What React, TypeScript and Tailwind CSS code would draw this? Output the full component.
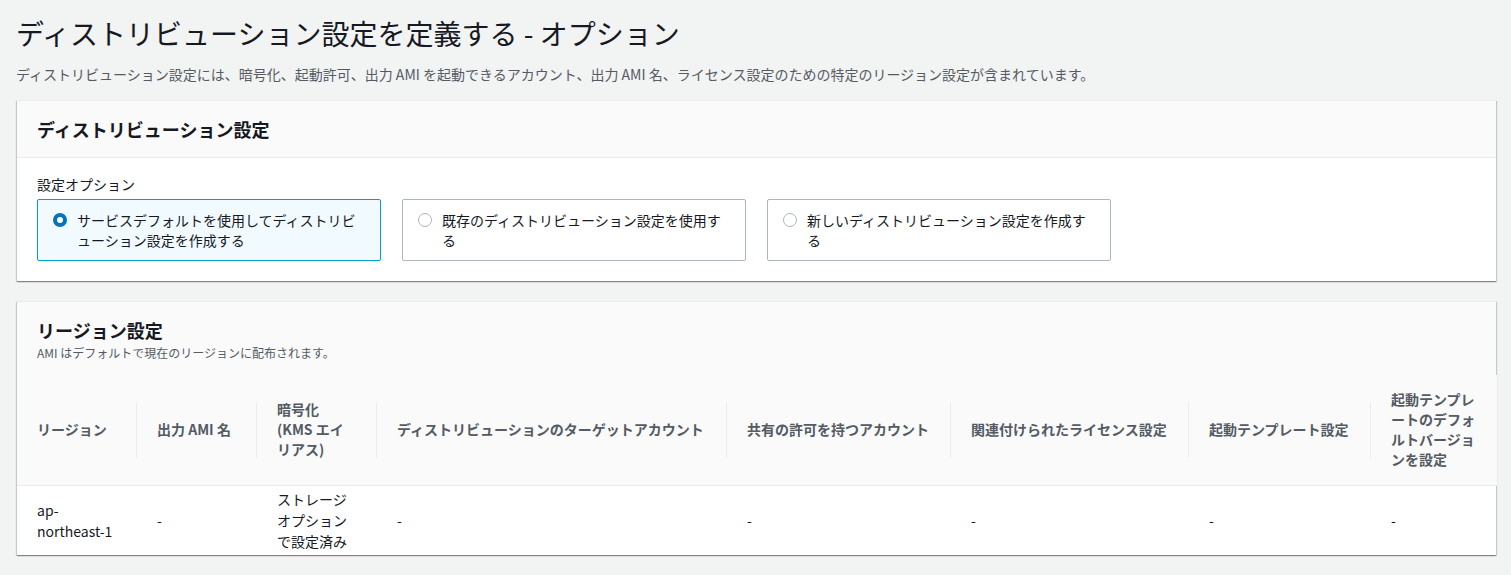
const font = { fontFamily: '"Noto Sans CJK JP", "Noto Sans", sans-serif' };

const cardCls =
  "mx-px bg-white border-t border-[#eaeded] shadow-[0_1px_1px_0_rgba(0,28,36,0.3),1px_1px_1px_0_rgba(0,28,36,0.15),-1px_1px_1px_0_rgba(0,28,36,0.15)]";

function Radio({ checked }: { checked: boolean }) {
  return checked ? (
    <span className="mt-[3px] flex h-[14px] w-[14px] shrink-0 items-center justify-center rounded-full bg-[#0073bb]">
      <span className="h-[6px] w-[6px] rounded-full bg-white" />
    </span>
  ) : (
    <span className="mt-[3px] h-[14px] w-[14px] shrink-0 rounded-full border-[1.5px] border-[#aab7b8] bg-white" />
  );
}

function Tile({ label, checked }: { label: string; checked: boolean }) {
  return (
    <div
      className={
        "flex w-[344px] gap-[10px] rounded-[2px] border py-[10px] pl-[15px] pr-[15px] " +
        (checked ? "border-[#00a1c9] bg-[#f1faff]" : "border-[#aab7b8] bg-white")
      }
    >
      <Radio checked={checked} />
      <span className="text-[14px] leading-[20px] text-[#16191f]">{label}</span>
    </div>
  );
}

const cols: { w: number; head: string[] }[] = [
  { w: 120, head: ["リージョン"] },
  { w: 120, head: ["出力 AMI 名"] },
  { w: 120, head: ["暗号化", "(KMS エイ", "リアス)"] },
  { w: 350, head: ["ディストリビューションのターゲットアカウント"] },
  { w: 224, head: ["共有の許可を持つアカウント"] },
  { w: 238, head: ["関連付けられたライセンス設定"] },
  { w: 182, head: ["起動テンプレート設定"] },
  { w: 126, head: ["起動テンプレ", "ートのデフォ", "ルトバージョ", "ンを設定"] },
];

const row: string[][] = [
  ["ap-", "northeast-1"],
  ["-"],
  ["ストレージ", "オプション", "で設定済み"],
  ["-"],
  ["-"],
  ["-"],
  ["-"],
  ["-"],
];

function Lines({ lines }: { lines: string[] }) {
  return (
    <>
      {lines.map((l, i) => (
        <span key={i} className="block whitespace-nowrap">
          {l}
        </span>
      ))}
    </>
  );
}

export default function App() {
  return (
    <div className="min-h-screen bg-[#f2f3f3] pl-4 pr-[14px] pt-[15px] pb-5" style={font}>
      <h1 className="text-[28px] leading-[36px] font-normal text-[#16191f]">
        ディストリビューション設定を定義する - オプション
      </h1>
      <p className="mt-[13px] text-[14px] leading-[20px] text-[#545b64]">
        ディストリビューション設定には、暗号化、起動許可、出力 AMI を起動できるアカウント、出力 AMI 名、ライセンス設定のための特定のリージョン設定が含まれています。
      </p>

      <section className={"mt-4 " + cardCls}>
        <div className="border-b border-[#eaeded] bg-[#fafafa] px-5 py-[14px]">
          <h2 className="text-[18px] leading-[28px] font-bold text-[#16191f]">ディストリビューション設定</h2>
        </div>
        <div className="px-5 pt-4 pb-5">
          <div className="text-[14px] leading-[20px] text-[#16191f]">設定オプション</div>
          <div className="mt-[5px] flex gap-[21px]">
            <Tile checked label="サービスデフォルトを使用してディストリビューション設定を作成する" />
            <Tile checked={false} label="既存のディストリビューション設定を使用する" />
            <Tile checked={false} label="新しいディストリビューション設定を作成する" />
          </div>
        </div>
      </section>

      <section className={"mt-5 " + cardCls}>
        <div className="bg-[#fafafa] px-5 pt-[14px] pb-[13px]">
          <h2 className="text-[18px] leading-[28px] font-bold text-[#16191f]">リージョン設定</h2>
          <p className="text-[12px] leading-[18px] text-[#545b64]">AMI はデフォルトで現在のリージョンに配布されます。</p>
        </div>
        <table className="w-full table-fixed border-collapse">
          <colgroup>
            {cols.map((c, i) => (
              <col key={i} style={{ width: c.w }} />
            ))}
          </colgroup>
          <thead>
            <tr className="border-b border-[#eaeded] bg-[#fafafa]">
              {cols.map((c, i) => (
                <th
                  key={i}
                  className="relative pt-[14px] pb-[16px] pl-5 pr-3 text-left align-middle text-[14px] leading-[20px] font-bold text-[#545b64]"
                >
                  <Lines lines={c.head} />
                  {i < cols.length - 1 && (
                    <span className="absolute right-0 top-[27px] bottom-[27px] w-px bg-[#eaeded]" />
                  )}
                </th>
              ))}
            </tr>
          </thead>
          <tbody>
            <tr>
              {row.map((cell, i) => (
                <td key={i} className="py-[3px] pl-5 pr-3 align-middle text-[14px] leading-[21px] text-[#16191f]">
                  <Lines lines={cell} />
                </td>
              ))}
            </tr>
          </tbody>
        </table>
      </section>
    </div>
  );
}
